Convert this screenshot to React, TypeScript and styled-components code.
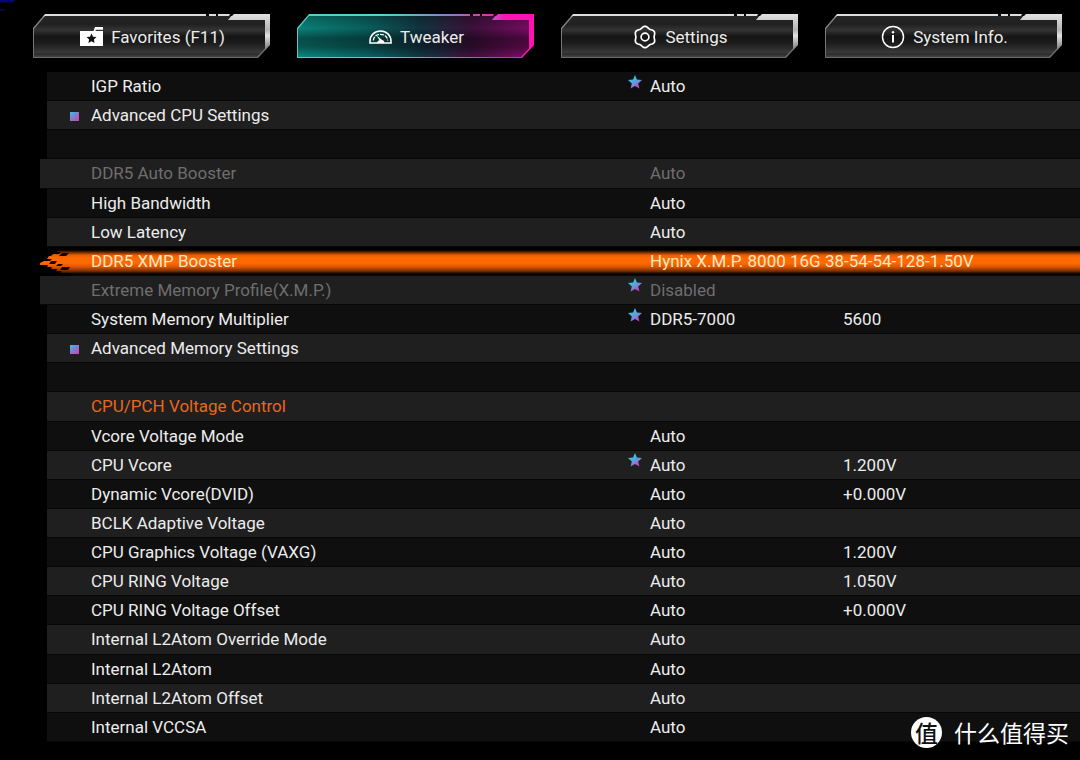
import React, { useState } from "react";
import styled, { createGlobalStyle, css } from "styled-components";

const GlobalStyle = createGlobalStyle`
  *, *::before, *::after { box-sizing: border-box; }
  html, body { margin: 0; background: #000; }
  body { font-family: Roboto, "Noto Sans CJK SC", sans-serif; font-size: 17px; line-height: 20px; color: #ececec; }
`;

const Page = styled.main`
  position: relative;
  display: flex;
  flex-direction: column;
  min-height: 100vh;
  padding-bottom: 18px;
  background: #000;
  overflow: hidden;
`;

const CornerGlow = styled.svg`
  position: absolute;
  top: 0;
  left: 0;
`;

/* ---------- tabs ---------- */

const TabBar = styled.nav`
  display: grid;
  grid-template-columns: repeat(4, minmax(0, 1fr));
  gap: 27px;
  padding: 14px 18px 14px 33px;
`;

const plainEdge = "linear-gradient(180deg, #dedede 0, #dedede 2px, #8d8d8d 3px, #686868 100%)";
const activeEdge =
  "linear-gradient(90deg, #5cc9c4 0%, #4fd8d2 35%, #7d8fc4 60%, #e02aa8 85%, #ff18b4 100%)";
const plainFill =
  "linear-gradient(180deg, #262626 0%, #202020 20%, #343434 34%, #151515 50%, #1c1c1c 66%, #3a3a3a 90%, #2a2a2a 92%, #444 100%)";
const activeFill = css`
  linear-gradient(180deg, rgba(0,0,0,0.3) 0%, rgba(0,0,0,0.1) 30%, rgba(0,0,0,0.45) 55%, rgba(0,0,0,0.4) 75%, rgba(0,0,0,0.05) 100%),
  linear-gradient(90deg, #0c8f86 0%, #0a6b68 28%, #123a46 52%, #421240 74%, #8a0d70 100%)
`;

const Tab = styled.button<{ $active: boolean }>`
  position: relative;
  display: flex;
  align-items: center;
  justify-content: center;
  gap: 8px;
  height: 44px;
  padding: 2px 0 0 2px;
  border: 0;
  background: ${(p) => (p.$active ? activeEdge : plainEdge)};
  clip-path: polygon(0 14px, 12px 0, 100% 0, 100% 31px, calc(100% - 12px) 100%, 0 100%);
  color: #ececec;
  font: inherit;
  cursor: pointer;

  &::before {
    content: "";
    position: absolute;
    inset: 2px 1px 1px 1px;
    background: ${(p) => (p.$active ? activeFill : plainFill)};
    clip-path: polygon(0 13px, 11px 0, 100% 0, 100% 28px, calc(100% - 12px) 100%, 0 100%);
  }
`;

const TabOrnament = styled.svg`
  position: absolute;
  top: 0;
  right: 0;
`;

const TabIcon = styled.svg`
  position: relative;
  flex: none;
`;

const TabText = styled.span`
  position: relative;
  white-space: nowrap;
`;

const FavoritesIcon = () => (
  <TabIcon width="23" height="22" viewBox="0 0 23 22" aria-hidden="true">
    <path d="M0 5h13.500L15 1h8v2.800H15.600V5H23v15H0z" fill="#fff" />
    <path
      d="M11.5 7.400l1.500 3.300 3.500.4-2.600 2.400.7 3.500-3.100-1.800-3.100 1.800.7-3.500-2.600-2.400 3.500-.4z"
      fill="#111"
    />
  </TabIcon>
);

const GaugeIcon = () => (
  <TabIcon width="23" height="22" viewBox="0 0 23 22" fill="none" aria-hidden="true">
    <path d="M1 17v-1.800C1 9.200 5.600 5 11.500 5S22 9.200 22 15.200V17z" stroke="#fff" strokeWidth="1.600" />
    <path d="M4.300 14.500c.3-3.700 3.200-6.200 7.200-6.200s6.900 2.500 7.200 6.200" stroke="#fff" strokeWidth="1.300" strokeDasharray="4 1" />
    <path d="M8 17c.4-1.600 1.300-2.400 2.500-2.700L7.500 9.400l5.300 4.300c1.600.4 2.400 1.500 2.700 3.300z" fill="#fff" />
  </TabIcon>
);

const gearOutline =
  Array.from({ length: 72 }, (_, i) => {
    const a = (i * Math.PI) / 36;
    const r = 9.9 + 0.8 * Math.cos(6 * a);
    const x = 12 + r * Math.sin(a);
    const y = 12 - r * Math.cos(a);
    return `${i ? "L" : "M"}${x.toFixed(2)} ${y.toFixed(2)}`;
  }).join("") + "Z";

const GearIcon = () => (
  <TabIcon width="24" height="24" viewBox="0 0 24 24" fill="none" stroke="#fff" strokeWidth="1.7" aria-hidden="true">
    <path d={gearOutline} strokeLinejoin="round" />
    <circle cx="12" cy="12" r="3.900" />
  </TabIcon>
);

const InfoIcon = () => (
  <TabIcon width="24" height="24" viewBox="0 0 24 24" fill="none" aria-hidden="true">
    <circle cx="12" cy="12" r="10.500" stroke="#fff" strokeWidth="1.500" />
    <path d="M12 10v7.500" stroke="#fff" strokeWidth="2" />
    <circle cx="12" cy="7.300" r="1.200" fill="#fff" />
  </TabIcon>
);

const tabs = [
  { label: "Favorites (F11)", Icon: FavoritesIcon },
  { label: "Tweaker", Icon: GaugeIcon },
  { label: "Settings", Icon: GearIcon },
  { label: "System Info.", Icon: InfoIcon },
];

const Ornament = ({ active }: { active: boolean }) => {
  const id = active ? "tag-active" : "tag-plain";
  return (
    <TabOrnament width="70" height="44" viewBox="0 0 70 44" aria-hidden="true">
      <defs>
        <linearGradient id={id} x1="0" y1="0" x2={active ? "0.6" : "0"} y2={active ? "0" : "1"}>
          <stop offset="0" stopColor={active ? "#c45cc8" : "#e2e2e2"} />
          <stop offset="0.45" stopColor={active ? "#f51ab2" : "#b4b4b4"} />
          <stop offset="0.6" stopColor={active ? "#ff12b4" : "#e2e2e2"} />
          <stop offset="1" stopColor={active ? "#ff12b4" : "#777"} />
        </linearGradient>
      </defs>
      <path d="M33 0H70V31L65 36V6H28z" fill={`url(#${id})`} />
      <path d="M6 0h3v2H6zM16 0h2v2h-2zM30 0h4l-2 2h-3z" fill="#080808" />
    </TabOrnament>
  );
};

/* ---------- settings table ---------- */

type Tone = "normal" | "disabled" | "selected" | "heading";

interface Setting {
  name?: string;
  value?: string;
  reading?: string;
  starred?: boolean;
  submenu?: boolean;
  tone?: Tone;
}

const settings: Setting[] = [
  { name: "IGP Ratio", value: "Auto", starred: true },
  { name: "Advanced CPU Settings", submenu: true },
  {},
  { name: "DDR5 Auto Booster", value: "Auto", tone: "disabled" },
  { name: "High Bandwidth", value: "Auto" },
  { name: "Low Latency", value: "Auto" },
  { name: "DDR5 XMP Booster", value: "Hynix X.M.P. 8000 16G 38-54-54-128-1.50V", tone: "selected" },
  { name: "Extreme Memory Profile(X.M.P.)", value: "Disabled", starred: true, tone: "disabled" },
  { name: "System Memory Multiplier", value: "DDR5-7000", reading: "5600", starred: true },
  { name: "Advanced Memory Settings", submenu: true },
  {},
  { name: "CPU/PCH Voltage Control", tone: "heading" },
  { name: "Vcore Voltage Mode", value: "Auto" },
  { name: "CPU Vcore", value: "Auto", reading: "1.200V", starred: true },
  { name: "Dynamic Vcore(DVID)", value: "Auto", reading: "+0.000V" },
  { name: "BCLK Adaptive Voltage", value: "Auto" },
  { name: "CPU Graphics Voltage (VAXG)", value: "Auto", reading: "1.200V" },
  { name: "CPU RING Voltage", value: "Auto", reading: "1.050V" },
  { name: "CPU RING Voltage Offset", value: "Auto", reading: "+0.000V" },
  { name: "Internal L2Atom Override Mode", value: "Auto" },
  { name: "Internal L2Atom", value: "Auto" },
  { name: "Internal L2Atom Offset", value: "Auto" },
  { name: "Internal VCCSA", value: "Auto" },
];

const toneColor: Record<Tone, string> = {
  normal: "#ececec",
  disabled: "#6e6e6e",
  selected: "#ffe6c4",
  heading: "#e8681a",
};

const Table = styled.table`
  flex: 1;
  display: flex;
  flex-direction: column;
  padding-left: 40px;
`;

const Body = styled.tbody`
  flex: 1;
  display: flex;
  flex-direction: column;
`;

const Row = styled.tr<{ $tone: Tone }>`
  position: relative;
  flex: 1 0 29px;
  display: grid;
  grid-template-columns: minmax(0, 581fr) minmax(0, 215fr) minmax(0, 237fr);
  align-items: center;
  margin-left: 7px;
  border-bottom: 1px solid #070707;
  background: #0f0f0f;
  color: ${(p) => toneColor[p.$tone]};

  &:nth-child(even) { background: #1f1f1f; }

  ${(p) =>
    p.$tone === "disabled" &&
    css`
      margin-left: 0;
      padding-left: 7px;
    `}

  ${(p) =>
    p.$tone === "selected" &&
    css`
      && {
        margin-left: 0;
        padding-left: 7px;
        background: linear-gradient(180deg, #000 3px, #5a2400 5px, #e85c00 8px, #ff6a00 11px, #ff6a00 16px, #d85600 20px, #7a3000 24px, #000 27px);
      }
    `}
`;

const NameCell = styled.th`
  display: grid;
  grid-template-columns: 21px 1fr;
  align-items: center;
  padding: 0 0 0 23px;
  font-weight: 400;
  text-align: left;
  white-space: nowrap;
`;

const NameText = styled.span`
  grid-column: 2;
`;

const SubmenuLink = styled.a`
  color: inherit;
  text-decoration: none;
`;

const Marker = styled.i`
  width: 9px;
  height: 9px;
  margin-top: 3px;
  background: linear-gradient(135deg, #41b8e0 10%, #8a78cc 50%, #c64cb0 90%);
`;

const ValueCell = styled.td`
  display: grid;
  grid-template-columns: 22px 1fr;
  align-items: center;
  padding: 0;
  white-space: nowrap;
`;

const ValueText = styled.span`
  grid-column: 2;
`;

const ReadingCell = styled.td`
  padding: 0;
  white-space: nowrap;
`;

const StarIcon = styled.svg`
  margin-bottom: 9px;
`;

const Star = () => (
  <StarIcon width="14" height="14" viewBox="0 0 14 14" aria-hidden="true">
    <defs>
      <linearGradient id="star" x1="0.2" y1="0.1" x2="0.8" y2="1">
        <stop offset="0.2" stopColor="#35c2e6" />
        <stop offset="0.55" stopColor="#6f92d8" />
        <stop offset="0.9" stopColor="#d03cc0" />
      </linearGradient>
    </defs>
    <path d="M7 0l1.900 4.500 5.100.5-3.800 3.400 1.200 5.100L7 10.900l-4.400 2.600 1.200-5.100L0 5l5.100-.5z" fill="url(#star)" />
  </StarIcon>
);

const GlitchEdge = styled.svg`
  position: absolute;
  top: 0;
  left: 0;
`;

const Glitch = () => (
  <GlitchEdge width="31" height="29" viewBox="0 0 31 29" aria-hidden="true">
    <path
      d="M0 0h31v3H19l-3 2h5l-2 2h-6l-2 2H9l-2 3h5l-2 2H4l-4 2v2h8l-1 2h5l-1 2h6l-1 2h6l-2 2h11v3H0z"
      fill="#000"
    />
    <path d="M22 6h7l-3 3h-7zM11 14h6l-2 3h-6zM18 17h5l-2 2h-5zM22 20h8l-2 3h-8z" fill="#120600" />
  </GlitchEdge>
);

const SettingRow = ({ name, value, reading, starred, submenu, tone = "normal" }: Setting) => (
  <Row $tone={tone}>
    <NameCell scope="row">
      {tone === "selected" && <Glitch />}
      {submenu && <Marker />}
      <NameText>{submenu ? <SubmenuLink href="#submenu">{name}</SubmenuLink> : name}</NameText>
    </NameCell>
    <ValueCell>
      {starred && <Star />}
      <ValueText>{value}</ValueText>
    </ValueCell>
    <ReadingCell>{reading}</ReadingCell>
  </Row>
);

/* ---------- watermark ---------- */

const Watermark = styled.div`
  position: absolute;
  right: 11px;
  bottom: 12px;
  display: flex;
  align-items: center;
  gap: 12px;
  color: #fff;
  font-family: "Noto Sans CJK SC", sans-serif;
  font-size: 23px;
  line-height: 31px;
`;

const Seal = styled.span`
  width: 31px;
  height: 31px;
  border-radius: 50%;
  background: #fff;
  color: #111;
  font-weight: 500;
  line-height: 30px;
  text-align: center;
`;

export default function App() {
  const [active, setActive] = useState("Tweaker");
  return (
    <Page>
      <GlobalStyle />
      <CornerGlow width="16" height="12" viewBox="0 0 16 12" aria-hidden="true">
        <path d="M0 0h15l-2 2.500H0z" fill="#06066e" />
        <path d="M0 9h6l-2 2H0z" fill="#06063a" />
      </CornerGlow>
      <TabBar>
        {tabs.map(({ label, Icon }) => (
          <Tab key={label} type="button" $active={label === active} onClick={() => setActive(label)}>
            <Ornament active={label === active} />
            <Icon />
            <TabText>{label}</TabText>
          </Tab>
        ))}
      </TabBar>
      <Table>
        <Body>
          {settings.map((s, i) => (
            <SettingRow key={i} {...s} />
          ))}
        </Body>
      </Table>
      <Watermark>
        <Seal>值</Seal>
        <span>什么值得买</span>
      </Watermark>
    </Page>
  );
}
